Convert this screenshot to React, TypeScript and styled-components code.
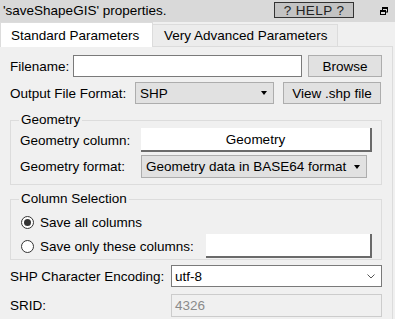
import React from "react";
import styled, { createGlobalStyle } from "styled-components";

const GlobalStyle = createGlobalStyle`
  html, body { margin: 0; padding: 0; background: #f0f0f0; }
  body {
    font-family: "Liberation Sans", Arial, sans-serif;
    font-size: 13.5px;
    color: #000;
  }
  * { box-sizing: border-box; }
`;

const Window = styled.div`
  width: 395px;
  height: 319px;
  overflow: hidden;
  background: #f0f0f0;
  display: flex;
  flex-direction: column;
`;

const TitleBar = styled.div`
  height: 22px;
  flex-shrink: 0;
  background: #d9d9d9;
  display: flex;
  align-items: flex-start;
  padding-left: 3px;
`;

const TitleText = styled.div`
  flex: 1;
  line-height: 16px;
  margin-top: 3px;
`;

const HelpButton = styled.div`
  width: 80px;
  height: 16px;
  margin: 2px 26px 0 0;
  background: #c3c3c3;
  border: 1px solid #333;
  display: flex;
  align-items: center;
  justify-content: center;
  color: #222;
  letter-spacing: 0.4px;
`;

const RestoreIcon = styled.svg`
  width: 8px;
  height: 8px;
  margin: 7px 7px 0 0;
`;

const TabRow = styled.div`
  display: flex;
  align-items: flex-end;
  height: 25px;
  flex-shrink: 0;
  border-bottom: 1px solid #dcdcdc;
  margin-right: 2px;
`;

const Tab = styled.div<{ $active?: boolean; $w: number }>`
  width: ${(p) => p.$w}px;
  height: ${(p) => (p.$active ? "25px" : "22px")};
  margin-bottom: ${(p) => (p.$active ? "-1px" : "0")};
  padding-left: ${(p) => (p.$active ? "10px" : "11px")};
  display: flex;
  align-items: center;
  background: ${(p) => (p.$active ? "#ffffff" : "#ececec")};
  border-top: 1px solid #dcdcdc;
  border-right: 1px solid #dcdcdc;
  border-left: ${(p) => (p.$active ? "1px solid #dcdcdc" : "none")};
  white-space: nowrap;
`;

const Panel = styled.div`
  flex: 1;
  margin-right: 2px;
  border-right: 1px solid #dcdcdc;
  padding: 8px 0 0 10px;
  display: flex;
  flex-direction: column;
`;

const Row = styled.div<{ $h?: number; $gap?: number; $indent?: number }>`
  display: flex;
  align-items: center;
  flex-shrink: 0;
  height: ${(p) => p.$h ?? 22}px;
  margin-bottom: ${(p) => p.$gap ?? 0}px;
  padding-left: ${(p) => p.$indent ?? 0}px;
`;

const Label = styled.div<{ $w: number }>`
  width: ${(p) => p.$w}px;
  flex-shrink: 0;
  white-space: nowrap;
`;

const TextInput = styled.div<{ $w: number; $h?: number; $disabled?: boolean }>`
  width: ${(p) => p.$w}px;
  height: ${(p) => p.$h ?? 22}px;
  background: ${(p) => (p.$disabled ? "#f0f0f0" : "#ffffff")};
  border: 1px solid ${(p) => (p.$disabled ? "#cccccc" : "#7a7a7a")};
  color: ${(p) => (p.$disabled ? "#8a8a8a" : "#000")};
  display: flex;
  align-items: center;
  padding-left: 3px;
`;

const PushButton = styled.div<{ $w: number; $ml: number }>`
  width: ${(p) => p.$w}px;
  height: 22px;
  margin-left: ${(p) => p.$ml}px;
  background: #e1e1e1;
  border: 1px solid #adadad;
  display: flex;
  align-items: center;
  justify-content: center;
  white-space: nowrap;
`;

const FieldButton = styled.div<{ $w: number }>`
  width: ${(p) => p.$w}px;
  height: 24px;
  background: #ffffff;
  border-right: 2px solid #6a6a6a;
  border-bottom: 2px solid #6a6a6a;
  display: flex;
  align-items: center;
  justify-content: center;
`;

const Combo = styled.div<{ $w: number; $h?: number; $white?: boolean }>`
  width: ${(p) => p.$w}px;
  height: ${(p) => p.$h ?? 22}px;
  background: ${(p) => (p.$white ? "#ffffff" : "#e1e1e1")};
  border: 1px solid ${(p) => (p.$white ? "#7a7a7a" : "#adadad")};
  display: flex;
  align-items: center;
  padding: 0 6px 0 ${(p) => (p.$white ? 3 : 4)}px;
  overflow: hidden;
`;

const ComboText = styled.div`
  flex: 1;
  min-width: 0;
  white-space: nowrap;
  overflow: hidden;
`;

const Arrow = styled.div`
  width: 0;
  height: 0;
  margin-left: 5px;
  border-left: 3.5px solid transparent;
  border-right: 3.5px solid transparent;
  border-top: 4px solid #000;
  flex-shrink: 0;
`;

const Group = styled.fieldset`
  margin: 0;
  width: 372px;
  flex-shrink: 0;
  border: 1px solid #dcdcdc;
  padding: 1px 0 0 0;
  min-width: 0;
  display: flex;
  flex-direction: column;
`;

const Legend = styled.legend`
  padding: 0 2px;
  margin-left: 8px;
  line-height: 14px;
`;

const RadioDot = styled.div<{ $on?: boolean }>`
  width: 13px;
  height: 13px;
  flex-shrink: 0;
  border-radius: 50%;
  border: 1px solid #333;
  background: #fff;
  margin-right: 6px;
  display: flex;
  align-items: center;
  justify-content: center;
  &::after {
    content: "";
    width: 7px;
    height: 7px;
    border-radius: 50%;
    background: ${(p) => (p.$on ? "#333" : "transparent")};
  }
`;

const Spacer = styled.div<{ $h: number }>`
  height: ${(p) => p.$h}px;
  flex-shrink: 0;
`;

export default function App() {
  return (
    <Window>
      <GlobalStyle />
      <TitleBar>
        <TitleText>'saveShapeGIS' properties.</TitleText>
        <HelpButton>? HELP ?</HelpButton>
        <RestoreIcon viewBox="0 0 8 8">
          <rect x="2.5" y="0.5" width="5" height="4.5" fill="none" stroke="#000" />
          <rect x="2" y="0" width="6" height="2" fill="#000" />
          <rect x="0.5" y="3.5" width="5" height="4" fill="#d9d9d9" stroke="#000" />
          <rect x="0" y="3" width="6" height="2" fill="#000" />
        </RestoreIcon>
      </TitleBar>
      <TabRow>
        <Tab $active $w={153}>Standard Parameters</Tab>
        <Tab $w={185}>Very Advanced Parameters</Tab>
      </TabRow>
      <Panel>
        <Row $gap={5}>
          <Label $w={63}>Filename:</Label>
          <TextInput $w={229} />
          <PushButton $w={74} $ml={6}>Browse</PushButton>
        </Row>
        <Row $gap={9}>
          <Label $w={125}>Output File Format:</Label>
          <Combo $w={139}>
            <ComboText>SHP</ComboText>
            <Arrow />
          </Combo>
          <PushButton $w={98} $ml={9}>View .shp file</PushButton>
        </Row>
        <Group>
          <Legend>Geometry</Legend>
          <Row $h={24} $gap={3} $indent={9}>
            <Label $w={121}>Geometry column:</Label>
            <FieldButton $w={231}>Geometry</FieldButton>
          </Row>
          <Row $h={23} $gap={6} $indent={9}>
            <Label $w={121}>Geometry format:</Label>
            <Combo $w={226} $h={23}>
              <ComboText>Geometry data in BASE64 format</ComboText>
              <Arrow />
            </Combo>
          </Row>
        </Group>
        <Spacer $h={7} />
        <Group>
          <Legend>Column Selection</Legend>
          <Row $h={18} $gap={3} $indent={10} style={{ marginTop: 6 }}>
            <RadioDot $on />
            <Label $w={150}>Save all columns</Label>
          </Row>
          <Row $h={24} $gap={1} $indent={10}>
            <RadioDot />
            <Label $w={166}>Save only these columns:</Label>
            <FieldButton $w={166} />
          </Row>
        </Group>
        <Spacer $h={5} />
        <Row $gap={7}>
          <Label $w={161}>SHP Character Encoding:</Label>
          <Combo $w={211} $white>
            <ComboText>utf-8</ComboText>
            <svg width="8" height="5" viewBox="0 0 8 5">
              <path d="M0.5 0.5 L4 4 L7.5 0.5" fill="none" stroke="#555" />
            </svg>
          </Combo>
        </Row>
        <Row $h={23}>
          <Label $w={161}>SRID:</Label>
          <TextInput $w={211} $h={23} $disabled>4326</TextInput>
        </Row>
      </Panel>
    </Window>
  );
}
